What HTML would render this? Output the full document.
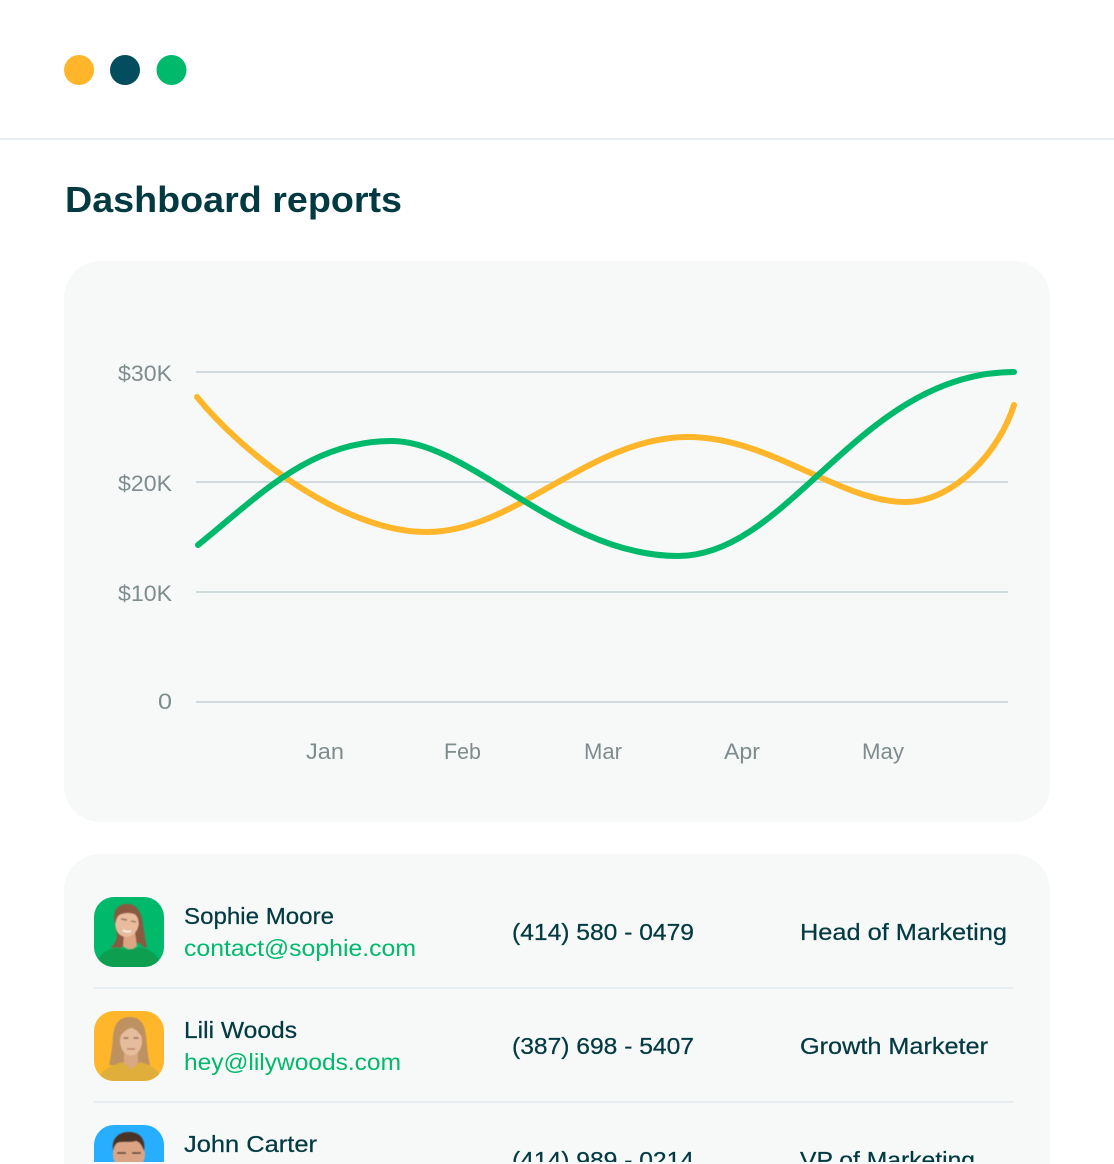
<!DOCTYPE html>
<html lang="en">
<head>
<meta charset="utf-8">
<title>Dashboard reports</title>
<style>
html,body{margin:0;padding:0;background:#fff;width:1114px;height:1164px;overflow:hidden}
svg{display:block}
text{font-family:"Liberation Sans",sans-serif}
.n{font-size:23px;fill:#033a42;stroke:#033a42;stroke-width:.25}
.e{font-size:23px;fill:#00b96b}
.l{font-size:22px;fill:#7f8c8d}
</style>
</head>
<body>
<svg width="1114" height="1164" viewBox="0 0 1114 1164" xmlns="http://www.w3.org/2000/svg">
<defs>
<clipPath id="c1"><rect x="94" y="897" width="70" height="70" rx="20"/></clipPath>
<clipPath id="c2"><rect x="94" y="1011" width="70" height="70" rx="20"/></clipPath>
<clipPath id="c3"><rect x="94" y="1125" width="70" height="70" rx="20"/></clipPath>
<clipPath id="bot"><rect x="0" y="0" width="1114" height="1162"/></clipPath>
<filter id="s" x="-10%" y="-10%" width="120%" height="120%"><feGaussianBlur stdDeviation="0.6"/></filter>
</defs>

<circle cx="79" cy="70" r="15" fill="#ffb62b"/>
<circle cx="125" cy="70" r="15" fill="#034d5e"/>
<circle cx="171.5" cy="70" r="15" fill="#00b96b"/>
<rect x="0" y="138" width="1114" height="2" fill="#e7edf0"/>

<text x="65" y="212" font-size="36" font-weight="700" fill="#033a42" textLength="337" lengthAdjust="spacingAndGlyphs">Dashboard reports</text>

<rect x="64" y="261" width="986" height="561" rx="36" fill="#f7f9f9"/>
<g fill="#d0dadc">
<rect x="196" y="371" width="812" height="2"/>
<rect x="196" y="481" width="812" height="2"/>
<rect x="196" y="591" width="812" height="2"/>
<rect x="196" y="701" width="812" height="2"/>
</g>
<g class="l">
<text class="l" x="118" y="381" textLength="54" lengthAdjust="spacingAndGlyphs">$30K</text>
<text class="l" x="118" y="491" textLength="54" lengthAdjust="spacingAndGlyphs">$20K</text>
<text class="l" x="118" y="601" textLength="54" lengthAdjust="spacingAndGlyphs">$10K</text>
<text class="l" x="158" y="709" textLength="14" lengthAdjust="spacingAndGlyphs">0</text>
<text class="l" x="306" y="759" textLength="38" lengthAdjust="spacingAndGlyphs">Jan</text>
<text class="l" x="444" y="759" textLength="37" lengthAdjust="spacingAndGlyphs">Feb</text>
<text class="l" x="584" y="759" textLength="38" lengthAdjust="spacingAndGlyphs">Mar</text>
<text class="l" x="724" y="759" textLength="36" lengthAdjust="spacingAndGlyphs">Apr</text>
<text class="l" x="862" y="759" textLength="42" lengthAdjust="spacingAndGlyphs">May</text>
</g>
<path d="M197 397 C 240 450, 340 532, 427 532 C 515 532, 590 437, 688 437 C 770 437, 840 502, 905 502 C 955 502, 1000 450, 1014 405" fill="none" stroke="#ffb62b" stroke-width="6" stroke-linecap="round"/>
<path d="M198 545 C 260 495, 310 441, 392 441 C 470 441, 560 556, 678 556 C 790 556, 860 372, 1014 372" fill="none" stroke="#00b96b" stroke-width="6" stroke-linecap="round"/>

<path d="M64 1164 V890 a36 36 0 0 1 36 -36 H1014 a36 36 0 0 1 36 36 V1164 Z" fill="#f7f9f9"/>
<rect x="94" y="987" width="920" height="2" fill="#e7edf0"/>
<rect x="94" y="1101" width="920" height="2" fill="#e7edf0"/>

<g clip-path="url(#bot)">
<g clip-path="url(#c1)">
<rect x="94" y="897" width="70" height="70" fill="#00b96b"/>
<g transform="translate(94 897)" filter="url(#s)">
<path d="M32 7 C24 7 20 13 20 21 L22 33 C24 40 22 46 17 50 C21 53 27 52 30 48 L46 46 C48 50 50 51 53 50 C51 42 50 32 48 22 C46 12 40 6 32 7 Z" fill="#8a5a40"/>
<path d="M2 72 C2 58 10 54 23 50 C30 53 38 53 46 50 C58 53 66 58 67 72 Z" fill="#0a9f50"/>
<path d="M30 38 L29 49 C33 53 39 53 43 49 L41 35 Z" fill="#dca684"/>
<ellipse cx="33" cy="27" rx="11.5" ry="13" fill="#e8bc9c" transform="rotate(14 33 27)"/>
<path d="M23 19 C27 11 37 10 44 19 C38 15 30 15 23 19 Z" fill="#8a5a40"/>
<path d="M27 22 l6 1 M37 24 l5 1" stroke="#7b5a48" stroke-width="1.4" opacity=".8"/>
<path d="M29 33 C31 35 35 35 37 34" stroke="#fff" stroke-width="1.6" fill="none" opacity=".85"/>
</g>
</g>
<g clip-path="url(#c2)">
<rect x="94" y="1011" width="70" height="70" fill="#ffb62b"/>
<g transform="translate(94 1011)" filter="url(#s)">
<path d="M36 6 C24 6 20 14 19 26 C18 38 17 47 15 54 L56 54 C54 46 53 36 52 25 C51 13 46 6 36 6 Z" fill="#bd9160"/>
<path d="M30 40 L30 54 L37 58 L44 54 L44 40 Z" fill="#d9a983"/>
<path d="M4 72 C5 60 15 55 29 51 L37 58 L46 51 C58 54 67 60 68 72 Z" fill="#dfae3a"/>
<ellipse cx="37" cy="30" rx="11" ry="14.5" fill="#e6bd9c"/>
<path d="M26 26 C28 17 33 14 38 13 C42 15 46 19 48 26 C44 20 40 17 37 17 C33 18 29 21 26 26 Z" fill="#bd9160"/>
<path d="M29.5 27 h5 M39.5 27 h5" stroke="#7d5a44" stroke-width="1.4" opacity=".8"/>
<path d="M33 38 h8" stroke="#b0705f" stroke-width="1.4" opacity=".85"/>
</g>
</g>
<g clip-path="url(#c3)">
<rect x="94" y="1125" width="70" height="70" fill="#27aeff"/>
<g transform="translate(94 1125)" filter="url(#s)">
<ellipse cx="35" cy="29" rx="16" ry="18" fill="#dba585"/>
<path d="M19 26 C17 12 26 7 35 7 C45 7 52 13 50 26 C48 21 46 17 42 16 C35 18 27 16 23 18 C21 20 20 22 19 26 Z" fill="#4a3226"/>
<path d="M23 28 h9 M38 28 h9" stroke="#4d3a30" stroke-width="1.8" opacity=".85"/>
</g>
</g>

<text class="n" x="184" y="924" textLength="150" lengthAdjust="spacingAndGlyphs">Sophie Moore</text>
<text class="e" x="184" y="956" textLength="232" lengthAdjust="spacingAndGlyphs">contact@sophie.com</text>
<text class="n" x="184" y="1038" textLength="113" lengthAdjust="spacingAndGlyphs">Lili Woods</text>
<text class="e" x="184" y="1070" textLength="217" lengthAdjust="spacingAndGlyphs">hey@lilywoods.com</text>
<text class="n" x="184" y="1152" textLength="133" lengthAdjust="spacingAndGlyphs">John Carter</text>

<text class="n" x="512" y="940" textLength="182" lengthAdjust="spacingAndGlyphs">(414) 580 - 0479</text>
<text class="n" x="512" y="1054" textLength="182" lengthAdjust="spacingAndGlyphs">(387) 698 - 5407</text>
<text class="n" x="512" y="1168" textLength="182" lengthAdjust="spacingAndGlyphs">(414) 989 - 0214</text>

<text class="n" x="800" y="940" textLength="207" lengthAdjust="spacingAndGlyphs">Head of Marketing</text>
<text class="n" x="800" y="1054" textLength="188" lengthAdjust="spacingAndGlyphs">Growth Marketer</text>
<text class="n" x="800" y="1168" textLength="175" lengthAdjust="spacingAndGlyphs">VP of Marketing</text>
</g>
</svg>
</body>
</html>
